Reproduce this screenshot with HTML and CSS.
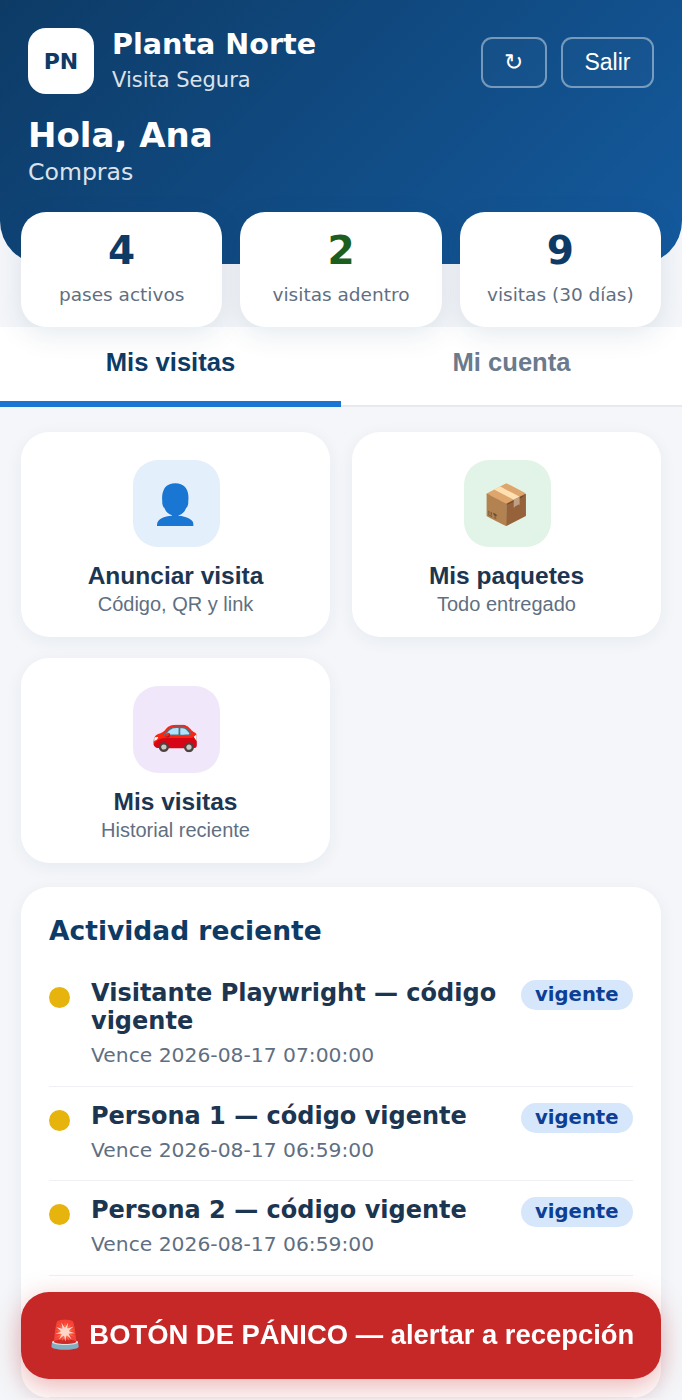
FILE: index.html
```html
<!DOCTYPE html>
<html lang="es">
<head>
    <meta charset="UTF-8">
    <meta name="viewport" content="width=device-width, initial-scale=1.0">
    <title>Visita Segura</title>
    <link rel="stylesheet" href="styles.css">
</head>
<body>
    <header class="hero">
        <div class="hero-top">
            <div class="brand">
                <div class="brand-logo">PN</div>
                <div>
                    <div class="brand-name">Planta Norte</div>
                    <div class="brand-sub">Visita Segura</div>
                </div>
            </div>
            <div class="hero-actions">
                <button class="ghost-btn refresh-btn">↻</button>
                <button class="ghost-btn">Salir</button>
            </div>
        </div>
        <h1 class="greeting">Hola, Ana</h1>
        <div class="department">Compras</div>
    </header>

    <section class="stats">
        <div class="stat">
            <div class="stat-value">4</div>
            <div class="stat-label">pases activos</div>
        </div>
        <div class="stat">
            <div class="stat-value stat-green">2</div>
            <div class="stat-label">visitas adentro</div>
        </div>
        <div class="stat">
            <div class="stat-value">9</div>
            <div class="stat-label">visitas (30 días)</div>
        </div>
    </section>

    <nav class="tabs">
        <button class="tab active">Mis visitas</button>
        <button class="tab">Mi cuenta</button>
    </nav>

    <main class="content">
        <div class="actions">
            <button class="action">
                <span class="action-icon icon-blue">👤</span>
                <span class="action-title">Anunciar visita</span>
                <span class="action-sub">Código, QR y link</span>
            </button>
            <button class="action">
                <span class="action-icon icon-green">📦</span>
                <span class="action-title">Mis paquetes</span>
                <span class="action-sub">Todo entregado</span>
            </button>
            <button class="action">
                <span class="action-icon icon-purple">🚗</span>
                <span class="action-title">Mis visitas</span>
                <span class="action-sub">Historial reciente</span>
            </button>
        </div>

        <section class="activity">
            <h2 class="activity-title">Actividad reciente</h2>
            <div class="row">
                <span class="dot"></span>
                <div class="row-body">
                    <div class="row-title">Visitante Playwright — código vigente</div>
                    <div class="row-sub">Vence 2026-08-17 07:00:00</div>
                </div>
                <span class="badge">vigente</span>
            </div>
            <div class="row">
                <span class="dot"></span>
                <div class="row-body">
                    <div class="row-title">Persona 1 — código vigente</div>
                    <div class="row-sub">Vence 2026-08-17 06:59:00</div>
                </div>
                <span class="badge">vigente</span>
            </div>
            <div class="row">
                <span class="dot"></span>
                <div class="row-body">
                    <div class="row-title">Persona 2 — código vigente</div>
                    <div class="row-sub">Vence 2026-08-17 06:59:00</div>
                </div>
                <span class="badge">vigente</span>
            </div>
            <div class="row row-empty"></div>
        </section>
    </main>

    <button class="panic">🚨 BOTÓN DE PÁNICO — alertar a recepción</button>
</body>
</html>
```

FILE: styles.css
```css
* {
    box-sizing: border-box;
}
body {
    margin: 0;
    background: #f4f6f9;
    font-family: "DejaVu Sans", sans-serif;
    color: #1c3550;
}
button {
    font-family: "Liberation Sans", Arial, sans-serif;
    cursor: pointer;
}
.hero {
    height: 264px;
    padding: 28px 28px 0;
    background: linear-gradient(135deg, #0d3b66, #145a9e);
    border-radius: 0 0 43px 43px;
    color: #fff;
}
.hero-top {
    display: flex;
    justify-content: space-between;
    align-items: center;
}
.brand {
    display: flex;
    align-items: center;
    gap: 18px;
}
.brand-logo {
    width: 66px;
    height: 66px;
    border-radius: 18px;
    background: #fff;
    color: #0d3b66;
    display: flex;
    align-items: center;
    justify-content: center;
    font-size: 22px;
    font-weight: 700;
}
.brand-name {
    font-size: 28.600px;
    font-weight: 700;
    line-height: 33px;
    margin-top: -1px;
}
.brand-sub {
    font-size: 21px;
    line-height: 25px;
    margin-top: 7px;
    opacity: 0.85;
}
.hero-actions {
    display: flex;
    gap: 14px;
    margin-top: 2px;
}
.ghost-btn {
    height: 51px;
    padding: 0 21.500px;
    border: 2px solid rgba(255, 255, 255, 0.42);
    border-radius: 11px;
    background: rgba(255, 255, 255, 0.02);
    color: #fff;
    font-size: 23px;
}
.refresh-btn {
    width: 66px;
    padding: 0;
}
.greeting {
    margin: 21px 0 0;
    font-size: 34px;
    line-height: 41px;
    font-weight: 700;
}
.department {
    font-size: 23.600px;
    line-height: 30px;
    margin-top: 1px;
    opacity: 0.85;
}
.stats {
    position: relative;
    z-index: 1;
    display: grid;
    grid-template-columns: repeat(3, 1fr);
    gap: 18px;
    padding: 0 21px;
    margin-top: -52px;
}
.stat {
    height: 115px;
    padding-top: 15px;
    background: #fff;
    border-radius: 25px;
    text-align: center;
    box-shadow: 0 8px 28px rgba(13, 59, 102, 0.1);
}
.stat-value {
    font-size: 39px;
    line-height: 48px;
    font-weight: 700;
    color: #0d3b66;
}
.stat-green {
    color: #1b5e20;
}
.stat-label {
    margin-top: 8px;
    font-size: 18.500px;
    line-height: 24px;
    color: #5f6f82;
}
.tabs {
    display: flex;
    height: 80px;
    background: #fff;
    border-bottom: 2px solid #e6e9ee;
}
.tab {
    flex: 1;
    border: 0;
    background: none;
    margin-bottom: -2px;
    border-bottom: 6px solid transparent;
    padding-bottom: 4px;
    font-size: 25.600px;
    font-weight: 700;
    color: #6b7a8c;
}
.tab.active {
    color: #0d3b66;
    border-bottom-color: #1976d2;
}
.content {
    padding: 25px 21px 0;
}
.actions {
    display: grid;
    grid-template-columns: 1fr 1fr;
    gap: 21px 22px;
}
.action {
    height: 205px;
    padding: 28px 10px 0;
    border: 0;
    border-radius: 28px;
    background: #fff;
    box-shadow: 0 4px 17px rgba(13, 59, 102, 0.06);
    display: flex;
    flex-direction: column;
    align-items: center;
}
.action-icon {
    width: 87px;
    height: 87px;
    margin-left: 2px;
    padding: 2px 2px 0 0;
    border-radius: 25px;
    display: flex;
    align-items: center;
    justify-content: center;
    font-size: 39px;
    margin-bottom: 14px;
}
.icon-blue {
    background: #e3effb;
}
.icon-green {
    background: #e2f3e8;
}
.icon-purple {
    background: #f0e8fa;
}
.action-title {
    font-size: 24.500px;
    line-height: 30px;
    font-weight: 700;
    color: #1c3550;
}
.action-sub {
    font-size: 20px;
    line-height: 26px;
    color: #5f6f82;
}
.activity {
    margin-top: 24px;
    padding: 28px 28px 0;
    background: #fff;
    border-radius: 28px;
    box-shadow: 0 4px 17px rgba(13, 59, 102, 0.06);
}
.activity-title {
    margin: 0 0 17px;
    font-size: 26.500px;
    line-height: 32px;
    font-weight: 700;
    color: #0d3b66;
}
.row {
    display: flex;
    align-items: flex-start;
    gap: 21px;
    padding: 15px 0 17.500px;
    border-bottom: 1px solid #eef0f3;
}
.row-empty {
    height: 122px;
}
.dot {
    flex: none;
    width: 21px;
    height: 21px;
    margin-top: 8px;
    border-radius: 50%;
    background: #e6b40c;
}
.row-body {
    flex: 1;
}
.row-title {
    font-size: 24px;
    line-height: 28px;
    font-weight: 700;
    color: #1c3550;
}
.row-sub {
    margin-top: 8px;
    font-size: 20.300px;
    line-height: 25px;
    color: #5f6f82;
}
.badge {
    flex: none;
    height: 30px;
    padding: 0 14.500px;
    margin-top: 1px;
    border-radius: 15px;
    background: #d6e6fb;
    color: #0d3f94;
    font-size: 19.600px;
    line-height: 29px;
    font-weight: 700;
}
.panic {
    position: fixed;
    left: 21px;
    right: 21px;
    bottom: 21px;
    height: 87px;
    border: 0;
    border-radius: 28px;
    background: #c62828;
    color: #fff;
    font-size: 27.400px;
    font-weight: 700;
    box-shadow: 0 8px 28px rgba(198, 40, 40, 0.35);
    white-space: nowrap;
    padding: 0 0 2px;
}
```
